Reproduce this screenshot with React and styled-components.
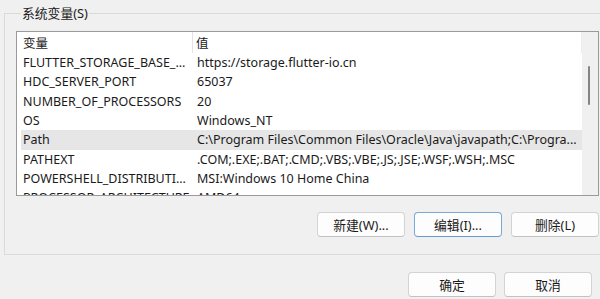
import React from "react";
import styled, { createGlobalStyle } from "styled-components";

const GlobalStyle = createGlobalStyle`
  html, body {
    margin: 0;
    padding: 0;
    background: #f0f0f0;
    overflow: hidden;
  }
  body {
    font-family: "Noto Sans", "Noto Sans CJK SC", sans-serif;
    font-size: 13px;
    color: #1a1a1a;
  }
`;

const Page = styled.div`
  width: 600px;
  height: 299px;
  overflow: hidden;
  padding-top: 5px;
  box-sizing: border-box;
`;

const GroupBox = styled.fieldset`
  margin: 0 -20px 0 4px;
  padding: 10px 0 17px 11px;
  border: 1px solid #dadada;
  min-width: 0;
`;

const Legend = styled.legend`
  margin-left: 5px;
  padding: 0 1px;
  line-height: 16px;
  font-size: 12.8px;
  color: #1a1a1a;
`;

const ListBox = styled.div`
  width: 583px;
  height: 165px;
  box-sizing: border-box;
  border: 1px solid #9a9a9a;
  background: #fff;
  display: flex;
  overflow: hidden;
`;

const ListBody = styled.div`
  flex: 1;
  padding-left: 4px;
  overflow: hidden;
  font-size: 12.5px;
`;

const HeaderRow = styled.div`
  display: flex;
  height: 21px;
  align-items: center;
  border-right: 1px solid #ececec;
`;

const HeaderCell = styled.div`
  width: ${(p) => p.$w || "auto"};
  flex: ${(p) => (p.$w ? "none" : 1)};
  height: 100%;
  display: flex;
  align-items: center;
  padding-left: ${(p) => p.$pad || "2px"};
  box-sizing: border-box;
  border-right: ${(p) => (p.$divider ? "1px solid #e3e3e3" : "none")};
`;

const Row = styled.div`
  display: flex;
  height: 19.33px;
  align-items: center;
  background: ${(p) => (p.$selected ? "#e6e6e6" : "transparent")};
  white-space: nowrap;
`;

const Cell = styled.div`
  width: ${(p) => p.$w || "auto"};
  flex: ${(p) => (p.$w ? "none" : 1)};
  padding-left: 2px;
  box-sizing: border-box;
  overflow: hidden;
  white-space: nowrap;
`;

const ScrollBar = styled.div`
  width: 16px;
  flex: none;
  background: #f0f0f0;
  position: relative;
`;

const Thumb = styled.div`
  position: absolute;
  left: 6px;
  top: 34px;
  width: 2px;
  height: 39px;
  border-radius: 1px;
  background: #858585;
`;

const ButtonRow = styled.div`
  display: flex;
  justify-content: flex-end;
  gap: 9px;
  width: 583px;
  margin-top: 16px;
`;

const Button = styled.button`
  width: 88px;
  height: 25px;
  box-sizing: border-box;
  border: 1px solid ${(p) => (p.$focused ? "#7aa7d6" : "#d3d3d3")};
  border-bottom-color: ${(p) => (p.$focused ? "#6a9bd0" : "#c2c2c2")};
  border-radius: 4px;
  background: #fdfdfd;
  font-family: "Noto Sans", "Noto Sans CJK SC", sans-serif;
  font-size: 12.8px;
  color: #1a1a1a;
  padding: 0;
`;

const FooterRow = styled.div`
  display: flex;
  justify-content: flex-end;
  gap: 8px;
  padding-right: 8px;
  margin-top: 17px;
`;

const vars = [
  ["FLUTTER_STORAGE_BASE_...", "https://storage.flutter-io.cn"],
  ["HDC_SERVER_PORT", "65037"],
  ["NUMBER_OF_PROCESSORS", "20"],
  ["OS", "Windows_NT"],
  ["Path", "C:\\Program Files\\Common Files\\Oracle\\Java\\javapath;C:\\Progra..."],
  ["PATHEXT", ".COM;.EXE;.BAT;.CMD;.VBS;.VBE;.JS;.JSE;.WSF;.WSH;.MSC"],
  ["POWERSHELL_DISTRIBUTI...", "MSI:Windows 10 Home China"],
  ["PROCESSOR_ARCHITECTURE", "AMD64"],
];

export default function App() {
  return (
    <Page>
      <GlobalStyle />
      <GroupBox>
        <Legend>系统变量(S)</Legend>
        <ListBox>
          <ListBody>
            <HeaderRow>
              <HeaderCell $w="172px" $divider>变量</HeaderCell>
              <HeaderCell $pad="3px">值</HeaderCell>
            </HeaderRow>
            {vars.map(([name, value]) => (
              <Row key={name} $selected={name === "Path"}>
                <Cell $w="174px">{name}</Cell>
                <Cell>{value}</Cell>
              </Row>
            ))}
          </ListBody>
          <ScrollBar>
            <Thumb />
          </ScrollBar>
        </ListBox>
        <ButtonRow>
          <Button>新建(W)...</Button>
          <Button $focused>编辑(I)...</Button>
          <Button>删除(L)</Button>
        </ButtonRow>
      </GroupBox>
      <FooterRow>
        <Button>确定</Button>
        <Button>取消</Button>
      </FooterRow>
    </Page>
  );
}
